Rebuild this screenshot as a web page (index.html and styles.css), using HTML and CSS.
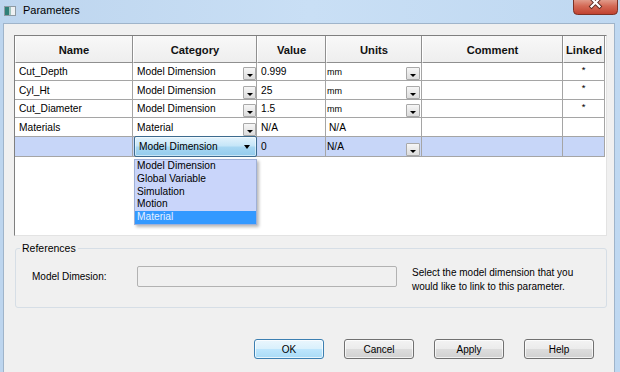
FILE: index.html
```html
<!DOCTYPE html>
<html>
<head>
<meta charset="utf-8">
<link rel="stylesheet" href="styles.css">
</head>
<body>
<div class="window">
  <div class="titlebar">
    <svg class="appicon" width="12" height="10" viewBox="0 0 12 10">
      <rect x="0" y="0" width="12" height="10" fill="#8f9aa3"/>
      <rect x="1" y="1" width="10" height="8" fill="#eef1f3"/>
      <rect x="1" y="1" width="4" height="8" fill="#2f7f77"/>
      <rect x="5" y="1" width="2" height="8" fill="#9fc3bf"/>
    </svg>
    <span class="title">Parameters</span>
    <div class="close">
      <svg width="45" height="15" viewBox="0 0 45 15">
        <defs>
          <linearGradient id="cg" x1="0" y1="0" x2="0" y2="1">
            <stop offset="0" stop-color="#e3a393"/>
            <stop offset="0.45" stop-color="#d46a56"/>
            <stop offset="1" stop-color="#c0402e"/>
          </linearGradient>
        </defs>
        <path d="M0.5 -1 V10.5 Q0.5 14.5 4.5 14.5 H40.5 Q44.5 14.5 44.5 10.5 V-1 Z" fill="url(#cg)" stroke="#7c3226"/>
        <path d="M18.5 -1.5 L26.5 6.5 M26.5 -1.5 L18.5 6.5" stroke="#5b2a22" stroke-width="4" stroke-linecap="square"/>
        <path d="M18.5 -1.5 L26.5 6.5 M26.5 -1.5 L18.5 6.5" stroke="#ffffff" stroke-width="2.2" stroke-linecap="square"/>
      </svg>
    </div>
  </div>
  <div class="client">
    <div class="gridwrap">
      <div class="grid">
        <div class="hd">Name</div>
        <div class="hd">Category</div>
        <div class="hd">Value</div>
        <div class="hd">Units</div>
        <div class="hd">Comment</div>
        <div class="hd">Linked</div>

        <div class="c">Cut_Depth</div>
        <div class="c combo">Model Dimension<span class="btn"><i></i></span></div>
        <div class="c">0.999</div>
        <div class="c combo units"><span class="mm">mm</span><span class="btn ub"><i></i></span></div>
        <div class="c"></div>
        <div class="c linked">*</div>

        <div class="c">Cyl_Ht</div>
        <div class="c combo">Model Dimension<span class="btn"><i></i></span></div>
        <div class="c">25</div>
        <div class="c combo units"><span class="mm">mm</span><span class="btn ub"><i></i></span></div>
        <div class="c"></div>
        <div class="c linked">*</div>

        <div class="c">Cut_Diameter</div>
        <div class="c combo">Model Dimension<span class="btn"><i></i></span></div>
        <div class="c">1.5</div>
        <div class="c combo units"><span class="mm">mm</span><span class="btn ub"><i></i></span></div>
        <div class="c"></div>
        <div class="c linked">*</div>

        <div class="c">Materials</div>
        <div class="c combo">Material<span class="btn"><i></i></span></div>
        <div class="c">N/A</div>
        <div class="c na">N/A</div>
        <div class="c"></div>
        <div class="c"></div>

        <div class="c sel"></div>
        <div class="c sel opencell"><div class="opencombo"><span>Model Dimension</span><i></i></div></div>
        <div class="c sel">0</div>
        <div class="c sel combo units"><span>N/A</span><span class="btn ub"><i></i></span></div>
        <div class="c sel"></div>
        <div class="c sel"></div>
      </div>
      <ul class="droplist">
        <li>Model Dimension</li>
        <li>Global Variable</li>
        <li>Simulation</li>
        <li>Motion</li>
        <li class="hi">Material</li>
      </ul>
    </div>

    <fieldset class="refs">
      <legend>References</legend>
      <div class="refrow">
        <span class="reflabel">Model Dimesion:</span>
        <span class="refinput"></span>
        <span class="refdesc">Select the model dimension that you<br>would like to link to this parameter.</span>
      </div>
    </fieldset>

    <div class="buttons">
      <button class="b ok">OK</button>
      <button class="b">Cancel</button>
      <button class="b">Apply</button>
      <button class="b">Help</button>
    </div>
  </div>
</div>
</body>
</html>
```

FILE: styles.css
```css
html, body {
  margin: 0;
  padding: 0;
}
body {
  width: 620px;
  height: 372px;
  overflow: hidden;
  font-family: "Liberation Sans", Arial, sans-serif;
  color: #000;
}
.window {
  width: 620px;
  height: 372px;
  background: linear-gradient(to right, #bdd5ee, #c9dff5 50%, #bfd8f1);
  display: flex;
  flex-direction: column;
}
.titlebar {
  height: 23px;
  flex: none;
  display: flex;
  align-items: flex-start;
  padding-left: 4px;
}
.appicon {
  margin-top: 6px;
  flex: none;
}
.title {
  margin-left: 7px;
  margin-top: 3px;
  font-size: 11px;
  line-height: 14px;
  color: #000;
}
.close {
  margin-left: auto;
  margin-right: 2px;
  width: 45px;
  height: 15px;
}
.close svg {
  display: block;
}
.client {
  flex: 1;
  margin: 0 5px 0 3px;
  border: 1px solid #9fb4ca;
  border-bottom: none;
  background: #f0f0f0;
  padding: 11px 7px 0 10px;
}
.gridwrap {
  position: relative;
  box-sizing: border-box;
  width: 593px;
  height: 201px;
  background: #fff;
  border: 1px solid;
  border-color: #7f7f7f #e3e3e3 #e3e3e3 #7f7f7f;
}
.grid {
  display: grid;
  grid-template-columns: 118px 124px 69px 96px 141px 42px;
  grid-template-rows: 27px 18px 19px 18px 19px 20px;
}
.hd {
  box-sizing: border-box;
  background: linear-gradient(#f8f8f8, #eeeeee);
  border-right: 1px solid #8f8f8f;
  border-left: 1px solid #ffffff;
  border-bottom: 1px solid #8f8f8f;
  font-weight: bold;
  font-size: 11.2px;
  color: #111;
  display: flex;
  align-items: center;
  justify-content: center;
  padding-top: 1px;
}
.c {
  box-sizing: border-box;
  border-right: 1px solid #a5a5a5;
  border-bottom: 1px solid #a5a5a5;
  font-size: 10.2px;
  display: flex;
  align-items: center;
  padding-left: 4px;
  white-space: nowrap;
}
.combo {
  justify-content: space-between;
  padding-right: 0;
}
.btn {
  align-self: flex-end;
  box-sizing: border-box;
  width: 13px;
  height: 13px;
  border: 1px solid #a9a9a9;
  border-radius: 1px;
  background: linear-gradient(#f6f6f6, #dcdcdc);
  display: flex;
  align-items: center;
  justify-content: center;
  margin-right: 0;
}
.btn.ub {
  width: 14px;
  margin-right: 1px;
}
.btn i, .opencombo i {
  display: block;
  width: 0;
  height: 0;
  border-left: 3px solid transparent;
  border-right: 3px solid transparent;
  border-top: 3px solid #000;
  margin-top: 3px;
}
.units {
  padding-left: 1px;
}
.mm {
  font-size: 9px;
  padding-top: 1px;
}
.na {
  padding-left: 3px;
}
.linked {
  justify-content: center;
  align-items: flex-start;
  padding-left: 0;
  padding-top: 2px;
  font-size: 9.5px;
  line-height: 10px;
}
.sel {
  background: #c7d6f8;
}
.opencell {
  padding: 0;
  border-right: none;
  position: relative;
}
.opencombo {
  box-sizing: border-box;
  width: 125px;
  height: 21px;
  margin-top: -1px;
  margin-left: 1px;
  border: 1px solid #3d6b8e;
  border-radius: 2px;
  background: linear-gradient(#e3f3fc, #c6e6f8 45%, #a6d6f2 55%, #93cbec);
  box-shadow: inset 0 0 0 1px rgba(255, 255, 255, 0.5);
  display: flex;
  align-items: center;
  justify-content: space-between;
  padding: 0 6px 0 4px;
  font-size: 10.2px;
}
.opencombo i {
  margin-top: 2px;
  border-left-width: 3.5px;
  border-right-width: 3.5px;
  border-top-width: 4px;
}
.droplist {
  position: absolute;
  left: 119px;
  top: 123px;
  width: 123px;
  margin: 0;
  padding: 0;
  list-style: none;
  box-sizing: border-box;
  border: 1px solid #9fb0d6;
  background: #c9d5fa;
  box-shadow: 2px 2px 3px rgba(0, 0, 0, 0.28);
}
.droplist li {
  font-size: 10.2px;
  line-height: 12.8px;
  height: 12.8px;
  padding-left: 2px;
  white-space: nowrap;
}
.droplist li.hi {
  background: #3399ff;
  color: #e6f0ff;
}
.refs {
  box-sizing: border-box;
  width: 592px;
  height: 66px;
  margin: 6px 0 0 1px;
  padding: 0;
  border: 1px solid #d6dee6;
  border-radius: 3px;
}
.refs legend {
  margin-left: 4px;
  padding: 0 2px;
  font-size: 10.5px;
  line-height: 13px;
}
.refrow {
  display: flex;
  align-items: flex-start;
  margin: 11px 0 0 16px;
}
.reflabel {
  width: 105px;
  font-size: 10px;
  line-height: 21px;
}
.refinput {
  box-sizing: border-box;
  width: 260px;
  height: 21px;
  border: 1px solid #b2b2b2;
  border-radius: 2px;
  background: #f0f0f0;
}
.refdesc {
  margin-left: 15px;
  font-size: 10px;
  line-height: 14px;
}
.buttons {
  display: flex;
  justify-content: flex-end;
  gap: 20px;
  margin-top: 31px;
  margin-right: 13px;
}
.b {
  box-sizing: border-box;
  width: 70px;
  height: 20px;
  margin: 0;
  padding: 0;
  border: 1px solid #707070;
  border-radius: 3px;
  background: linear-gradient(#f3f3f3, #ebebeb 50%, #dddddd 50%, #d1d1d1);
  box-shadow: inset 0 0 0 1px rgba(255, 255, 255, 0.7);
  font-family: "Liberation Sans", Arial, sans-serif;
  font-size: 10px;
  color: #000;
}
.b.ok {
  border-color: #3c7fb1;
  background: linear-gradient(#eaf6fd, #d9f0fc 50%, #bee6fd 50%, #a9dbf6);
}
```
